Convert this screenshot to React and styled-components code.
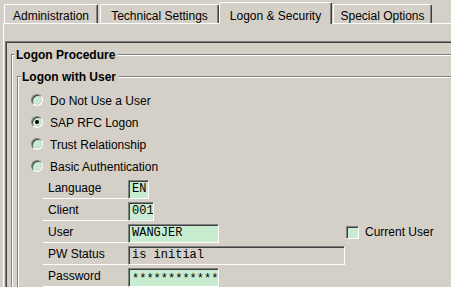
import styled, { createGlobalStyle } from 'styled-components';

const Global = createGlobalStyle`
	html, body {
		margin: 0;
		padding: 0;
		overflow: hidden;
		background: #d4d0c8;
	}
	body {
		font-family: "Liberation Sans", Arial, sans-serif;
		font-size: 12px;
		color: #000;
	}
`;

const tabs = [
	{label: 'Administration', width: 94},
	{label: 'Technical Settings', width: 119},
	{label: 'Logon & Security', width: 113, active: true},
	{label: 'Special Options', width: 99},
];

const fields = [
	{label: 'Language', value: 'EN', width: 21},
	{label: 'Client', value: '001', width: 26},
	{label: 'User', value: 'WANGJER', width: 91, check: 'Current User'},
	{label: 'PW Status', value: 'is initial', width: 217, readOnly: true},
	{label: 'Password', value: '************', width: 91, secret: true},
];

export default function App() {
	return (
		<>
			<Global />
			<Window>
				<TabRow>
					{tabs.map((t) => (
						<Tab key={t.label} $active={t.active} style={{width: t.width}}>
							{t.label}
						</Tab>
					))}
				</TabRow>
				<Panel>
					<Frame>
						<Group>
							<GroupHead>
								<Stub />
								<GroupTitle>Logon Procedure</GroupTitle>
								<Rule />
							</GroupHead>
							<GroupBody $pad={8} $left={5}>
								<Group>
									<GroupHead>
										<Stub />
										<GroupTitle>Logon with User</GroupTitle>
										<Rule />
									</GroupHead>
									<GroupBody $pad={6} $left={1}>
										<Radio label="Do Not Use a User" />
										<Radio label="SAP RFC Logon" checked />
										<Radio label="Trust Relationship" />
										<Radio label="Basic Authentication" />
										{fields.map((f) => (
											<FieldRow key={f.label}>
												<Label>{f.label}</Label>
												<Input
													$readOnly={f.readOnly}
													$secret={f.secret}
													style={{width: f.width}}
												>
													{f.value}
												</Input>
												{f.check && (
													<Check>
														<CheckBox />
														{f.check}
													</Check>
												)}
											</FieldRow>
										))}
									</GroupBody>
								</Group>
							</GroupBody>
						</Group>
					</Frame>
				</Panel>
			</Window>
		</>
	);
}

function Radio({label, checked}) {
	return (
		<RadioRow>
			<RadioDot $checked={checked} />
			{label}
		</RadioRow>
	);
}

const Window = styled.div`
	box-sizing: border-box;
	width: 451px;
	height: 287px;
	overflow: hidden;
	padding: 2px 0 0 3px;
`;

const TabRow = styled.div`
	display: flex;
	align-items: flex-end;
	height: 21px;
	padding-left: 1px;
`;

const Tab = styled.div`
	box-sizing: border-box;
	flex: none;
	height: ${(p) => (p.$active ? '22px' : '19px')};
	margin: ${(p) => (p.$active ? '0 1px -1px -2px' : '0 2px 0 0')};
	padding-top: ${(p) => (p.$active ? '6px' : '4px')};
	position: relative;
	z-index: ${(p) => (p.$active ? 1 : 0)};
	background: #d4d0c8;
	border-top: 1px solid #fff;
	border-left: 1px solid #fff;
	border-right: 1px solid #404040;
	border-radius: 2px 2px 0 0;
	box-shadow: inset -1px 0 #808080;
	line-height: 14px;
	text-align: center;
	white-space: nowrap;
`;

const Panel = styled.div`
	width: 520px;
	height: 300px;
	border-top: 1px solid #fff;
	border-left: 1px solid #fff;
	padding: 17px 0 0 1px;
`;

const Frame = styled.div`
	height: 100%;
	border-top: 1px solid #808080;
	border-left: 1px solid #808080;
	box-shadow: inset 1px 1px #404040;
	padding: 5px 0 0 5px;
`;

const Group = styled.div`
	display: flex;
	flex-direction: column;
`;

const GroupHead = styled.div`
	display: flex;
	height: 14px;
`;

const Stub = styled.div`
	width: 3px;
	margin-top: 7px;
	border-top: 1px solid #808080;
	border-left: 1px solid #808080;
	box-shadow: inset 1px 1px #fff;
`;

const GroupTitle = styled.div`
	padding: 0 3px 0 1px;
	font-weight: bold;
	line-height: 16px;
	white-space: nowrap;
`;

const Rule = styled.div`
	flex: 1;
	height: 0;
	margin-top: 7px;
	border-top: 1px solid #808080;
	border-bottom: 1px solid #fff;
`;

const GroupBody = styled.div`
	border-left: 1px solid #808080;
	box-shadow: inset 1px 0 #fff;
	padding: ${(p) => p.$pad}px 0 0 ${(p) => p.$left}px;
`;

const RadioRow = styled.div`
	box-sizing: border-box;
	display: flex;
	align-items: center;
	height: 22px;
	padding: 1px 0 0 12px;
	white-space: nowrap;
`;

const RadioDot = styled.span`
	box-sizing: border-box;
	position: relative;
	width: 12px;
	height: 12px;
	margin: -1px 7px 0 0;
	border-radius: 50%;
	border: 1px solid;
	border-color: #808080 #fff #fff #808080;
	box-shadow: inset 1px 1px #404040, inset -1px -1px #d4d0c8;
	background: #c8ecd0;

	&::after {
		content: '';
		display: ${(p) => (p.$checked ? 'block' : 'none')};
		position: absolute;
		left: 3px;
		top: 3px;
		width: 4px;
		height: 4px;
		border-radius: 50%;
		background: #000;
	}
`;

const FieldRow = styled.div`
	display: flex;
	height: 22px;
	padding-left: 24px;
`;

const Label = styled.div`
	box-sizing: border-box;
	width: 85px;
	padding: 1px 0 0 5px;
	border-bottom: 1px solid #fff;
	line-height: 21px;
	white-space: nowrap;
`;

const Input = styled.div`
	box-sizing: border-box;
	align-self: flex-end;
	height: 19px;
	padding: ${(p) => (p.$secret ? '2px' : '0')} 0 0 3px;
	border: 1px solid;
	border-color: #808080 #fff #fff #808080;
	box-shadow: inset 1px 1px #404040;
	background: ${(p) => (p.$readOnly ? '#d4d0c8' : '#c8ecd0')};
	font-family: "Liberation Mono", "Courier New", monospace;
	font-size: 12px;
	line-height: 17px;
	white-space: nowrap;
	overflow: hidden;
`;

const Check = styled.div`
	display: flex;
	align-items: center;
	margin-left: 127px;
	white-space: nowrap;
`;

const CheckBox = styled.span`
	box-sizing: border-box;
	width: 13px;
	height: 13px;
	margin-right: 6px;
	border: 1px solid;
	border-color: #808080 #fff #fff #808080;
	box-shadow: inset 1px 1px #404040;
	background: #c8ecd0;
`;
